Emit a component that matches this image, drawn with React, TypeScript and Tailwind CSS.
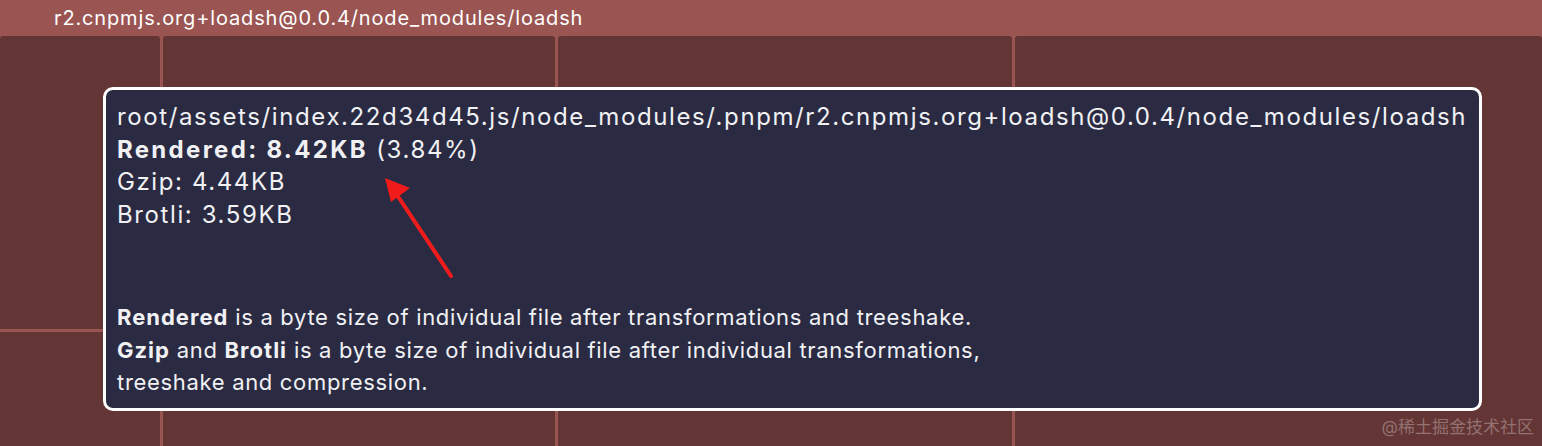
export default function App() {
  return (
    <div
      className="relative flex h-[446px] w-[1542px] flex-col overflow-hidden bg-[#9a5553]"
      style={{ fontFamily: 'Inter, "Noto Sans CJK SC", sans-serif' }}
    >
      {/* treemap header */}
      <div className="flex h-[36px] shrink-0 items-center pl-[54px] text-[20px] tracking-[0.85px] text-white">
        r2.cnpmjs.org+loadsh@0.0.4/node_modules/loadsh
      </div>

      {/* treemap cells */}
      <div className="flex flex-1 gap-[3px]">
        <div className="flex w-[160px] flex-col gap-[3px]">
          <div className="h-[293px] rounded-t-[3px] bg-[#633535]"></div>
          <div className="flex-1 bg-[#633535]"></div>
        </div>
        <div className="w-[392px] rounded-t-[3px] bg-[#633535]"></div>
        <div className="w-[454px] rounded-t-[3px] bg-[#633535]"></div>
        <div className="flex-1 rounded-t-[3px] bg-[#633535]"></div>
      </div>

      {/* tooltip */}
      <div className="absolute left-[103px] top-[87px] h-[324px] w-[1379px] rounded-[10px] border-[3px] border-white bg-[#2a2b42] px-[11px] pt-[11px] text-[24px] leading-[32.5px] tracking-[1.6px] text-[#f1f1f4]">
        <div>root/assets/index.22d34d45.js/node_modules/.pnpm/r2.cnpmjs.org+loadsh@0.0.4/node_modules/loadsh</div>
        <div>
          <b className="tracking-[2.3px]">Rendered: 8.42KB</b> (3.84%)
        </div>
        <div>Gzip: 4.44KB</div>
        <div>Brotli: 3.59KB</div>
        <div className="mt-[70px] text-[22px] leading-[32.5px] tracking-[0.68px]">
          <div>
            <b className="tracking-[1px]">Rendered</b> is a byte size of individual file after transformations and treeshake.
          </div>
          <div>
            <b className="tracking-[1px]">Gzip</b> and <b className="tracking-[1px]">Brotli</b> is a byte size of individual file after individual transformations,
          </div>
          <div>treeshake and compression.</div>
        </div>
      </div>

      {/* red arrow annotation */}
      <svg className="absolute left-[375px] top-[170px]" width="90" height="115" viewBox="0 0 90 115">
        <line x1="76" y1="106" x2="20" y2="22" stroke="#f21b1b" strokeWidth="4" strokeLinecap="round" />
        <polygon points="10,8 35,18 16,32" fill="#f21b1b" />
      </svg>

      {/* watermark */}
      <div className="absolute bottom-[6px] right-[8px] text-[17px] text-[#a08080] opacity-80">@稀土掘金技术社区</div>
    </div>
  );
}
